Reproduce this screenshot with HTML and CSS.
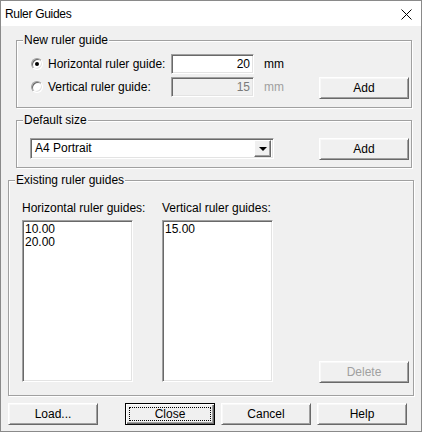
FILE: index.html
```html
<!DOCTYPE html>
<html>
<head>
<meta charset="utf-8">
<link rel="stylesheet" href="styles.css">
</head>
<body>
<div class="window">
  <div class="titlebar">
    <span class="title">Ruler Guides</span>
    <svg class="close" width="11" height="11" viewBox="0 0 11 11"><path d="M0.5 0.5 L10.5 10.5 M10.5 0.5 L0.5 10.5" stroke="#000" stroke-width="1" fill="none"/></svg>
  </div>
  <div class="content">
    <div class="group g1">
      <span class="legend">New ruler guide</span>
      <div class="row">
        <span class="radio checked"></span>
        <span class="rlabel">Horizontal ruler guide:</span>
        <div class="edit">20</div>
        <span class="unit">mm</span>
      </div>
      <div class="row">
        <span class="radio"></span>
        <span class="rlabel">Vertical ruler guide:</span>
        <div class="edit disabled">15</div>
        <span class="unit dis">mm</span>
        <button class="btn">Add</button>
      </div>
    </div>

    <div class="group g2">
      <span class="legend">Default size</span>
      <div class="row2">
        <div class="combo">
          <span class="combo-text">A4 Portrait</span>
          <span class="drop"><span class="tri"></span></span>
        </div>
        <button class="btn">Add</button>
      </div>
    </div>

    <div class="group g3">
      <span class="legend">Existing ruler guides</span>
      <div class="cols">
        <div class="col">
          <span class="lab">Horizontal ruler guides:</span>
          <div class="list"><div>10.00</div><div>20.00</div></div>
        </div>
        <div class="col col2">
          <span class="lab">Vertical ruler guides:</span>
          <div class="list"><div>15.00</div></div>
        </div>
        <div class="col col3">
          <button class="btn dis-btn">Delete</button>
        </div>
      </div>
    </div>

    <div class="bottom">
      <button class="btn">Load...</button>
      <button class="btn default b-close"><span class="focus">Close</span></button>
      <button class="btn b-cancel">Cancel</button>
      <button class="btn b-help">Help</button>
    </div>
  </div>
</div>
</body>
</html>
```
FILE: styles.css
```css
html, body {
  margin: 0;
  padding: 0;
  background: #f0f0f0;
}
body {
  font-family: "Liberation Sans", Arial, sans-serif;
  font-size: 12px;
  color: #000;
}
.window {
  width: 422px;
  height: 432px;
  box-sizing: border-box;
  border: 1px solid #8a8a8a;
  background: #f0f0f0;
  display: flex;
  flex-direction: column;
}
.titlebar {
  height: 25px;
  background: #fff;
  display: flex;
  align-items: center;
  justify-content: space-between;
  padding-left: 4px;
}
.title {
  font-size: 12px;
  letter-spacing: -0.3px;
  margin-top: 1px;
}
.close {
  margin-right: 9px;
  margin-top: 1px;
}
.content {
  flex: 1;
  display: flex;
  flex-direction: column;
}
.group {
  position: relative;
  border: 1px solid #a0a0a0;
  box-shadow: inset 1px 1px 0 #fff, 1px 1px 0 #fff;
  box-sizing: border-box;
}
.legend {
  position: absolute;
  top: -8px;
  left: 6px;
  padding: 0 1px;
  line-height: 14px;
  background: #f0f0f0;
  white-space: nowrap;
}
.g1 {
  margin: 14px 0 0 15px;
  width: 396px;
  padding: 13px 0 8px 14px;
  display: flex;
  flex-direction: column;
  gap: 3px;
}
.row {
  display: flex;
  align-items: flex-start;
}
.radio {
  flex: none;
  width: 12px;
  height: 12px;
  box-sizing: border-box;
  border-radius: 50%;
  border: 1px solid;
  border-color: #a0a0a0 #fff #fff #a0a0a0;
  box-shadow: inset 1px 1px 0 #696969, inset -1px -1px 0 #e3e3e3;
  background: #fff;
  margin-top: 4px;
  position: relative;
}
.radio.checked::after {
  content: "";
  position: absolute;
  left: 3px;
  top: 3px;
  width: 4px;
  height: 4px;
  border-radius: 50%;
  background: #000;
}
.rlabel {
  flex: none;
  margin-left: 5px;
  width: 123px;
  line-height: 20px;
  white-space: nowrap;
}
.edit {
  flex: none;
  width: 83px;
  height: 20px;
  box-sizing: border-box;
  border: 1px solid;
  border-color: #a0a0a0 #fff #fff #a0a0a0;
  box-shadow: inset 1px 1px 0 #696969, inset -1px -1px 0 #e3e3e3;
  background: #fff;
  text-align: right;
  padding-right: 3px;
  line-height: 18px;
}
.edit.disabled {
  background: #f0f0f0;
  color: #7a7a7a;
}
.unit {
  flex: none;
  margin-left: 10px;
  width: 55px;
  line-height: 20px;
}
.unit.dis {
  color: #a0a0a0;
}
.btn {
  flex: none;
  width: 90px;
  height: 22px;
  box-sizing: border-box;
  padding: 0;
  margin: 0;
  font-family: "Liberation Sans", Arial, sans-serif;
  font-size: 12px;
  color: #000;
  background: #f0f0f0;
  border: 1px solid;
  border-color: #fff #696969 #696969 #fff;
  box-shadow: inset 1px 1px 0 #f8f8f8, inset -1px -1px 0 #a0a0a0;
  border-radius: 0;
  display: flex;
  align-items: center;
  justify-content: center;
  line-height: 14px;
}
.dis-btn {
  color: #a0a0a0;
}
.g2 {
  margin: 12px 0 0 15px;
  width: 396px;
  padding: 17px 0 7px 13px;
}
.row2 {
  display: flex;
  align-items: flex-start;
}
.row2 .btn {
  margin-left: 45px;
}
.combo {
  flex: none;
  width: 244px;
  height: 21px;
  box-sizing: border-box;
  border: 1px solid;
  border-color: #a0a0a0 #fff #fff #a0a0a0;
  box-shadow: inset 1px 1px 0 #696969, inset -1px -1px 0 #e3e3e3;
  background: #fff;
  display: flex;
  align-items: center;
  justify-content: space-between;
  padding: 2px;
}
.combo-text {
  padding-left: 2px;
  line-height: 15px;
}
.drop {
  width: 17px;
  height: 17px;
  box-sizing: border-box;
  background: #f0f0f0;
  border: 1px solid;
  border-color: #fff #696969 #696969 #fff;
  box-shadow: inset -1px -1px 0 #a0a0a0;
  display: flex;
  align-items: center;
  justify-content: center;
}
.tri {
  width: 0;
  height: 0;
  border-left: 4px solid transparent;
  border-right: 4px solid transparent;
  border-top: 4px solid #000;
  margin-top: 1px;
}
.g3 {
  margin: 12px 0 0 7px;
  width: 406px;
  padding: 21px 0 13px 13px;
}
.cols {
  display: flex;
}
.col {
  flex: none;
  width: 111px;
  display: flex;
  flex-direction: column;
}
.col2 {
  margin-left: 29px;
}
.col3 {
  width: 90px;
  margin-left: 46px;
  justify-content: flex-end;
}
.col3 .btn {
  margin-bottom: -1px;
}
.lab {
  line-height: 13px;
  height: 13px;
  white-space: nowrap;
}
.list {
  margin-top: 5px;
  width: 111px;
  height: 162px;
  box-sizing: border-box;
  border: 1px solid;
  border-color: #a0a0a0 #fff #fff #a0a0a0;
  box-shadow: inset 1px 1px 0 #696969, inset -1px -1px 0 #e3e3e3;
  background: #fff;
  padding: 2px 2px 0 2px;
  line-height: 13px;
}
.bottom {
  display: flex;
  margin: 7px 0 0 7px;
}
.default {
  border: 1px solid #000;
  box-shadow: inset 1px 1px 0 #fff, inset -1px -1px 0 #696969, inset -2px -2px 0 #a0a0a0;
  padding: 3px;
  margin-left: 27px;
}
.focus {
  flex: 1;
  align-self: stretch;
  border: 1px dotted #000;
  display: flex;
  align-items: center;
  justify-content: center;
}
.b-cancel {
  margin-left: 6px;
}
.b-help {
  margin-left: 6px;
}
```
